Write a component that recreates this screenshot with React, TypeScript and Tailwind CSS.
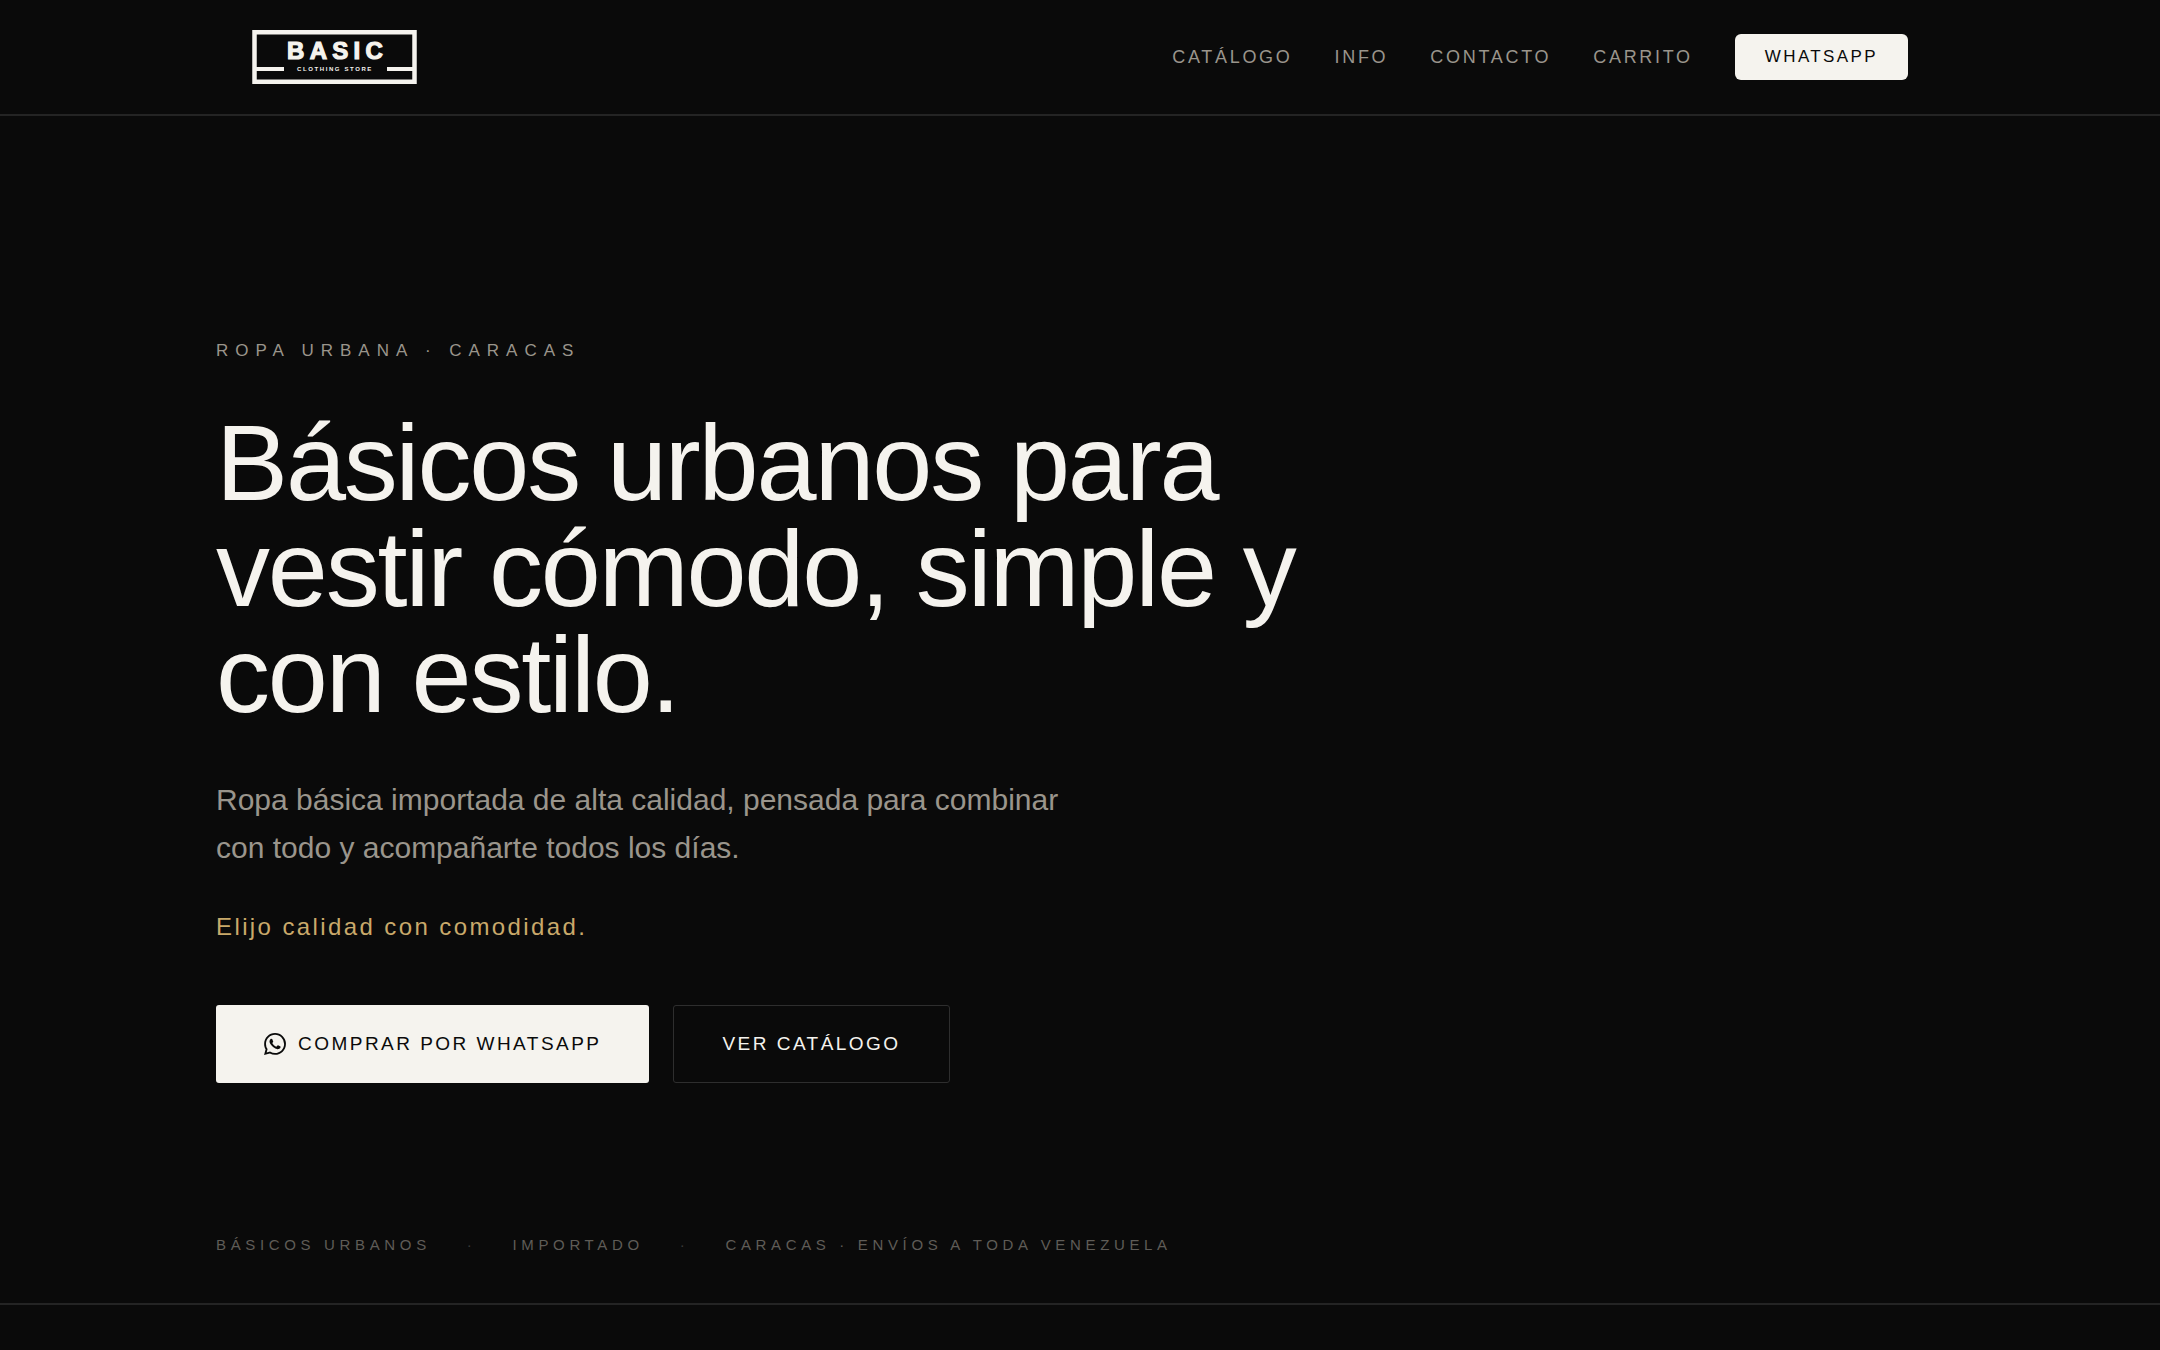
import React from 'react';

const navLinks = [
  { label: 'Catálogo', href: '#catalogo' },
  { label: 'Info', href: '#info' },
  { label: 'Contacto', href: '#contacto' },
  { label: 'Carrito', href: '#carrito' }
];

const highlights = ['Básicos urbanos', 'Importado', 'Caracas · Envíos a toda Venezuela'];

const Logo: React.FC = () => (
  <svg width="165" height="54" viewBox="0 0 165 54" role="img" aria-label="Basic Clothing Store">
    <rect x="2.5" y="2.25" width="160" height="49.5" fill="none" stroke="#f5f3ee" strokeWidth="4.5" />
    <rect x="4" y="37" width="28" height="4" fill="#f5f3ee" />
    <rect x="135" y="37" width="27" height="4" fill="#f5f3ee" />
    <text x="35" y="29" fontSize="24" fontWeight="700" letterSpacing="5.3" fill="#f5f3ee" stroke="#f5f3ee" strokeWidth="1.2" fontFamily="'Liberation Sans', sans-serif">
      BASIC
    </text>
    <text x="45" y="41" fontSize="6" fontWeight="700" letterSpacing="1.6" fill="#f5f3ee" fontFamily="'Liberation Sans', sans-serif">
      CLOTHING STORE
    </text>
  </svg>
);

const WhatsAppIcon: React.FC = () => (
  <svg width="22" height="22" viewBox="0 0 24 24" fill="currentColor" aria-hidden="true">
    <path d="M17.472 14.382c-.297-.149-1.758-.867-2.03-.967-.273-.099-.471-.148-.67.15-.197.297-.767.966-.94 1.164-.173.199-.347.223-.644.075-.297-.15-1.255-.463-2.39-1.475-.883-.788-1.48-1.761-1.653-2.059-.173-.297-.018-.458.13-.606.134-.133.298-.347.446-.52.149-.174.198-.298.298-.497.099-.198.05-.371-.025-.52-.075-.149-.669-1.612-.916-2.207-.242-.579-.487-.5-.669-.51-.173-.008-.371-.01-.57-.01-.198 0-.52.074-.792.372-.272.297-1.04 1.016-1.04 2.479 0 1.462 1.065 2.875 1.213 3.074.149.198 2.096 3.2 5.077 4.487.709.306 1.262.489 1.694.625.712.227 1.36.195 1.871.118.571-.085 1.758-.719 2.006-1.413.248-.694.248-1.289.173-1.413-.074-.124-.272-.198-.57-.347m-5.421 7.403h-.004a9.87 9.87 0 01-5.031-1.378l-.361-.214-3.741.982.998-3.648-.235-.374a9.86 9.86 0 01-1.51-5.26c.001-5.45 4.436-9.884 9.888-9.884 2.64 0 5.122 1.03 6.988 2.898a9.825 9.825 0 012.893 6.994c-.003 5.45-4.437 9.884-9.885 9.884m8.413-18.297A11.815 11.815 0 0012.05 0C5.495 0 .16 5.335.157 11.892c0 2.096.547 4.142 1.588 5.945L.057 24l6.305-1.654a11.882 11.882 0 005.683 1.448h.005c6.554 0 11.89-5.335 11.893-11.893a11.821 11.821 0 00-3.48-8.413z" />
  </svg>
);

const App: React.FC = () => {
  return (
    <div className="min-h-screen bg-[#0a0a0a] font-['Liberation_Sans',Arial,sans-serif] text-[#f5f3ee]">
      {/* Header */}
      <header className="border-b-2 border-[#242424]">
        <div className="mx-auto flex max-w-[1800px] items-center justify-between px-[72px] py-[30px]">
          <a href="#inicio">
            <Logo />
          </a>
          <nav className="flex items-center gap-[42px] text-lg uppercase tracking-[0.15em]">
            {navLinks.map((link) => (
              <a key={link.href} href={link.href} className="text-[#9a958c] hover:text-[#f5f3ee]">
                {link.label}
              </a>
            ))}
            <a href="#whatsapp" className="rounded-md bg-[#f5f3ee] px-[30px] py-[9px] text-[17px] leading-7 tracking-[0.14em] text-[#0a0a0a]">
              WhatsApp
            </a>
          </nav>
        </div>
      </header>

      {/* Hero */}
      <main className="border-b-2 border-[#242424]">
        <div className="mx-auto max-w-[1800px] px-9 pt-[221px] pb-[46px]">
          <p className="text-[17px] leading-7 uppercase tracking-[0.41em] text-[#9a958c]">Ropa urbana · Caracas</p>
          <h1 className="mt-[45px] max-w-[1140px] text-[108px] leading-[106px] tracking-[-0.02em]">
            Básicos urbanos para vestir cómodo, simple y con estilo.
          </h1>
          <p className="mt-12 max-w-[860px] text-[30px] leading-[48px] text-[#9a958c]">
            Ropa básica importada de alta calidad, pensada para combinar con todo y acompañarte todos los días.
          </p>
          <p className="mt-[37px] text-2xl leading-9 tracking-[0.1em] text-[#c9a96a]">Elijo calidad con comodidad.</p>

          <div className="mt-[60px] flex flex-wrap gap-6 text-[19px] uppercase tracking-[0.13em]">
            <a href="#whatsapp" className="flex h-[78px] items-center gap-3 rounded-[3px] bg-[#f5f3ee] px-12 text-[#0a0a0a]">
              <WhatsAppIcon />
              Comprar por WhatsApp
            </a>
            <a href="#catalogo" className="flex h-[78px] items-center rounded-[3px] border border-[#2e2e2e] px-12">
              Ver catálogo
            </a>
          </div>

          {/* Highlights */}
          <ul className="mt-[150px] flex flex-wrap gap-9 text-[15px] leading-6 uppercase tracking-[0.31em] text-[#5f5c57]">
            {highlights.map((item, index) => (
              <li key={item} className="flex gap-9">
                {index > 0 && <span className="text-[#3a3a3a]">·</span>}
                {item}
              </li>
            ))}
          </ul>
        </div>
      </main>
    </div>
  );
};

export default App;
